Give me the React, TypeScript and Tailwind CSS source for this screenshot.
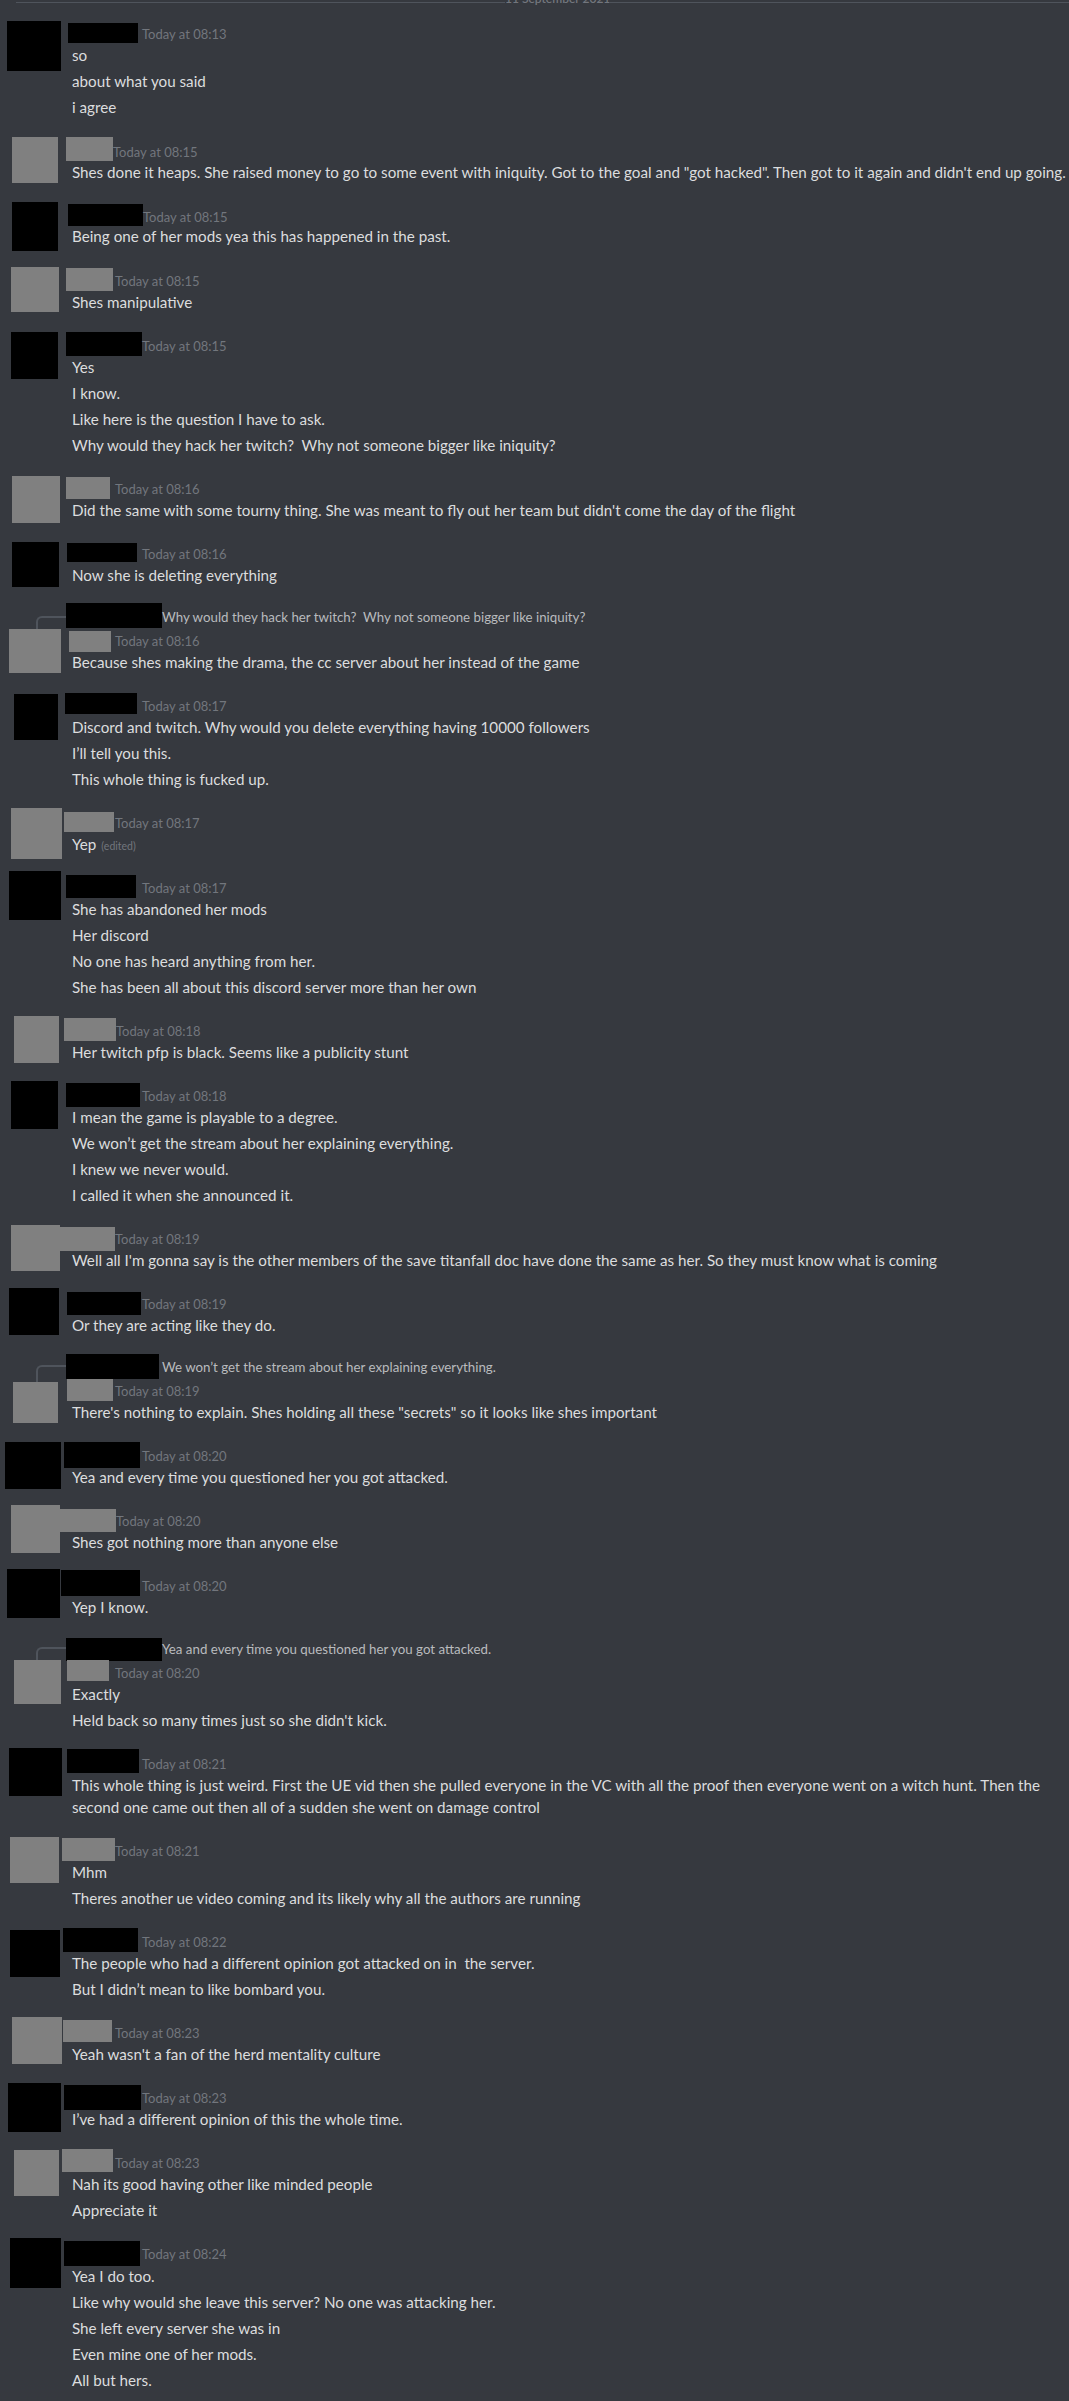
type Reply = {
  spine: string;
  name: string;
  text: string;
  body: string;
};

type Msg = {
  block: string;
  row?: string;
  avatar: string;
  col: string;
  head: string;
  name: string;
  time: string;
  text: string;
  stamp: string;
  lines: string[];
  wrap?: boolean;
  edited?: boolean;
  reply?: Reply;
};

const BLACK = "bg-black";
const GRAY = "bg-[#808080]";

const messages: Msg[] = [
  {
    block: "h-[116px]",
    avatar: `ml-[7px] w-[54px] h-[50px] ${BLACK}`,
    col: "ml-[7px]",
    head: "mt-[2px]",
    name: `w-[70px] h-[20px] ${BLACK}`,
    time: "ml-[4px] mt-[3px]",
    text: "ml-[4px] -mt-[1px]",
    stamp: "08:13",
    lines: ["so", "about what you said", "i agree"],
  },
  {
    block: "h-[65px]",
    avatar: `ml-[12px] w-[46px] h-[46px] ${GRAY}`,
    col: "ml-[8px]",
    head: "mt-0",
    name: `w-[47px] h-[24px] ${GRAY}`,
    time: "ml-0 mt-[7px]",
    text: "ml-[6px] -mt-[2px]",
    stamp: "08:15",
    lines: [
      'Shes done it heaps. She raised money to go to some event with iniquity. Got to the goal and "got hacked". Then got to it again and didn\'t end up going.',
    ],
  },
  {
    block: "h-[65px]",
    avatar: `ml-[12px] w-[46px] h-[49px] ${BLACK}`,
    col: "ml-[10px]",
    head: "mt-[2px]",
    name: `w-[75px] h-[22px] ${BLACK}`,
    time: "ml-0 mt-[5px]",
    text: "ml-[4px] -mt-[3px]",
    stamp: "08:15",
    lines: ["Being one of her mods yea this has happened in the past."],
  },
  {
    block: "h-[65px]",
    avatar: `ml-[11px] w-[48px] h-[45px] ${GRAY}`,
    col: "ml-[7px]",
    head: "mt-[1px]",
    name: `w-[47px] h-[23px] ${GRAY}`,
    time: "ml-[2px] mt-[5px]",
    text: "ml-[6px] -mt-[2px]",
    stamp: "08:15",
    lines: ["Shes manipulative"],
  },
  {
    block: "h-[144px]",
    avatar: `ml-[11px] w-[47px] h-[47px] ${BLACK}`,
    col: "ml-[8px]",
    head: "mt-0",
    name: `w-[76px] h-[24px] ${BLACK}`,
    time: "ml-0 mt-[6px]",
    text: "ml-[6px] -mt-[2px]",
    stamp: "08:15",
    lines: [
      "Yes",
      "I know.",
      "Like here is the question I have to ask.",
      "Why would they hack her twitch?  Why not someone bigger like iniquity?",
    ],
  },
  {
    block: "h-[66px]",
    avatar: `ml-[12px] w-[48px] h-[47px] ${GRAY}`,
    col: "ml-[6px]",
    head: "mt-[1px]",
    name: `w-[44px] h-[22px] ${GRAY}`,
    time: "ml-[5px] mt-[4px]",
    text: "ml-[6px] -mt-[2px]",
    stamp: "08:16",
    lines: [
      "Did the same with some tourny thing. She was meant to fly out her team but didn't come the day of the flight",
    ],
  },
  {
    block: "h-[61px]",
    avatar: `ml-[12px] w-[47px] h-[45px] ${BLACK}`,
    col: "ml-[8px]",
    head: "mt-[1px]",
    name: `w-[70px] h-[19px] ${BLACK}`,
    time: "ml-[5px] mt-[3px]",
    text: "ml-[5px] mt-0",
    stamp: "08:16",
    lines: ["Now she is deleting everything"],
  },
  {
    block: "h-[90px]",
    row: "h-[25px]",
    avatar: `ml-[9px] mt-[1px] w-[52px] h-[44px] ${GRAY}`,
    col: "ml-[8px]",
    head: "mt-[3px]",
    name: `w-[42px] h-[21px] ${GRAY}`,
    time: "ml-[4px] mt-[2px]",
    text: "ml-[3px] -mt-[3px]",
    stamp: "08:16",
    lines: ["Because shes making the drama, the cc server about her instead of the game"],
    reply: {
      spine: "mt-[13px] h-[13px]",
      name: "w-[96px] h-[25px]",
      text: "ml-0 mt-[6px]",
      body: "Why would they hack her twitch?  Why not someone bigger like iniquity?",
    },
  },
  {
    block: "h-[115px]",
    avatar: `ml-[14px] mt-[1px] w-[44px] h-[46px] ${BLACK}`,
    col: "ml-[7px]",
    head: "mt-0",
    name: `w-[72px] h-[21px] ${BLACK}`,
    time: "ml-[5px] mt-[5px]",
    text: "ml-[7px] mt-0",
    stamp: "08:17",
    lines: [
      "Discord and twitch. Why would you delete everything having 10000 followers",
      "I’ll tell you this.",
      "This whole thing is fucked up.",
    ],
  },
  {
    block: "h-[63px]",
    avatar: `ml-[11px] w-[51px] h-[51px] ${GRAY}`,
    col: "ml-[2px]",
    head: "mt-[4px]",
    name: `w-[50px] h-[20px] ${GRAY}`,
    time: "ml-[1px] mt-[3px]",
    text: "ml-[8px] -mt-[1px]",
    stamp: "08:17",
    lines: ["Yep"],
    edited: true,
  },
  {
    block: "h-[145px]",
    avatar: `ml-[9px] w-[52px] h-[49px] ${BLACK}`,
    col: "ml-[5px]",
    head: "mt-[4px]",
    name: `w-[70px] h-[23px] ${BLACK}`,
    time: "ml-[6px] mt-[5px]",
    text: "ml-[6px] -mt-[2px]",
    stamp: "08:17",
    lines: [
      "She has abandoned her mods",
      "Her discord",
      "No one has heard anything from her.",
      "She has been all about this discord server more than her own",
    ],
  },
  {
    block: "h-[65px]",
    avatar: `ml-[14px] w-[45px] h-[47px] ${GRAY}`,
    col: "ml-[5px]",
    head: "mt-[2px]",
    name: `w-[52px] h-[23px] ${GRAY}`,
    time: "ml-0 mt-[5px]",
    text: "ml-[8px] -mt-[2px]",
    stamp: "08:18",
    lines: ["Her twitch pfp is black. Seems like a publicity stunt"],
  },
  {
    block: "h-[144px]",
    avatar: `ml-[11px] w-[47px] h-[48px] ${BLACK}`,
    col: "ml-[8px]",
    head: "mt-[2px]",
    name: `w-[74px] h-[24px] ${BLACK}`,
    time: "ml-[2px] mt-[5px]",
    text: "ml-[6px] -mt-[3px]",
    stamp: "08:18",
    lines: [
      "I mean the game is playable to a degree.",
      "We won’t get the stream about her explaining everything.",
      "I knew we never would.",
      "I called it when she announced it.",
    ],
  },
  {
    block: "h-[63px]",
    avatar: `ml-[11px] w-[49px] h-[46px] ${GRAY}`,
    col: "ml-0",
    head: "mt-[2px]",
    name: `w-[55px] h-[24px] ${GRAY}`,
    time: "ml-0 mt-[4px]",
    text: "ml-[12px] -mt-[4px]",
    stamp: "08:19",
    lines: [
      "Well all I'm gonna say is the other members of the save titanfall doc have done the same as her. So they must know what is coming",
    ],
  },
  {
    block: "h-[66px]",
    avatar: `ml-[9px] w-[50px] h-[47px] ${BLACK}`,
    col: "ml-[8px]",
    head: "mt-[4px]",
    name: `w-[74px] h-[23px] ${BLACK}`,
    time: "ml-[1px] mt-[4px]",
    text: "ml-[5px] -mt-[3px]",
    stamp: "08:19",
    lines: ["Or they are acting like they do."],
  },
  {
    block: "h-[88px]",
    row: "h-[25px]",
    avatar: `ml-[13px] mt-[3px] w-[45px] h-[41px] ${GRAY}`,
    col: "ml-[9px]",
    head: "mt-0",
    name: `w-[46px] h-[22px] ${GRAY}`,
    time: "ml-[2px] mt-[4px]",
    text: "ml-[5px] -mt-[2px]",
    stamp: "08:19",
    lines: [
      'There\'s nothing to explain. Shes holding all these "secrets" so it looks like shes important',
    ],
    reply: {
      spine: "mt-[11px] h-[17px]",
      name: "w-[93px] h-[25px]",
      text: "ml-[3px] mt-[5px]",
      body: "We won’t get the stream about her explaining everything.",
    },
  },
  {
    block: "h-[63px]",
    avatar: `ml-[5px] w-[56px] h-[47px] ${BLACK}`,
    col: "ml-[3px]",
    head: "mt-0",
    name: `w-[76px] h-[26px] ${BLACK}`,
    time: "ml-[2px] mt-[6px]",
    text: "ml-[8px] -mt-[4px]",
    stamp: "08:20",
    lines: ["Yea and every time you questioned her you got attacked."],
  },
  {
    block: "h-[64px]",
    avatar: `ml-[11px] w-[49px] h-[48px] ${GRAY}`,
    col: "ml-0",
    head: "mt-[4px]",
    name: `w-[56px] h-[23px] ${GRAY}`,
    time: "ml-0 mt-[4px]",
    text: "ml-[12px] -mt-[3px]",
    stamp: "08:20",
    lines: ["Shes got nothing more than anyone else"],
  },
  {
    block: "h-[69px]",
    avatar: `ml-[7px] w-[53px] h-[49px] ${BLACK}`,
    col: "ml-[1px]",
    head: "mt-[1px]",
    name: `w-[79px] h-[26px] ${BLACK}`,
    time: "ml-[2px] mt-[8px]",
    text: "ml-[11px] -mt-[2px]",
    stamp: "08:20",
    lines: ["Yep I know."],
  },
  {
    block: "h-[110px]",
    row: "h-[23px]",
    avatar: `ml-[14px] -mt-[1px] w-[47px] h-[44px] ${GRAY}`,
    col: "ml-[6px]",
    head: "-mt-[1px]",
    name: `w-[42px] h-[21px] ${GRAY}`,
    time: "ml-[6px] mt-[5px]",
    text: "ml-[5px] mt-0",
    stamp: "08:20",
    lines: ["Exactly", "Held back so many times just so she didn't kick."],
    reply: {
      spine: "mt-[9px] h-[13px]",
      name: "w-[96px] h-[23px]",
      text: "ml-0 mt-[3px]",
      body: "Yea and every time you questioned her you got attacked.",
    },
  },
  {
    block: "h-[89px]",
    avatar: `ml-[9px] w-[53px] h-[48px] ${BLACK}`,
    col: "ml-[5px]",
    head: "mt-[1px]",
    name: `w-[72px] h-[24px] ${BLACK}`,
    time: "ml-[3px] mt-[7px]",
    text: "ml-[5px] mt-[1px]",
    stamp: "08:21",
    wrap: true,
    lines: [
      "This whole thing is just weird. First the UE vid then she pulled everyone in the VC with all the proof then everyone went on a witch hunt. Then the",
      "second one came out then all of a sudden she went on damage control",
    ],
  },
  {
    block: "h-[91px]",
    avatar: `ml-[10px] w-[49px] h-[46px] ${GRAY}`,
    col: "ml-[3px]",
    head: "mt-[1px]",
    name: `w-[53px] h-[23px] ${GRAY}`,
    time: "ml-0 mt-[5px]",
    text: "ml-[10px] -mt-[2px]",
    stamp: "08:21",
    lines: ["Mhm", "Theres another ue video coming and its likely why all the authors are running"],
  },
  {
    block: "h-[89px]",
    avatar: `ml-[10px] mt-[2px] w-[50px] h-[47px] ${BLACK}`,
    col: "ml-[3px]",
    head: "mt-0",
    name: `w-[75px] h-[24px] ${BLACK}`,
    time: "ml-[4px] mt-[6px]",
    text: "ml-[9px] -mt-[2px]",
    stamp: "08:22",
    lines: [
      "The people who had a different opinion got attacked on in  the server.",
      "But I didn’t mean to like bombard you.",
    ],
  },
  {
    block: "h-[66px]",
    avatar: `ml-[12px] w-[50px] h-[47px] ${GRAY}`,
    col: "ml-[1px]",
    head: "mt-[3px]",
    name: `w-[49px] h-[22px] ${GRAY}`,
    time: "ml-[3px] mt-[5px]",
    text: "ml-[9px] -mt-[1px]",
    stamp: "08:23",
    lines: ["Yeah wasn't a fan of the herd mentality culture"],
  },
  {
    block: "h-[66px]",
    avatar: `ml-[8px] w-[53px] h-[49px] ${BLACK}`,
    col: "ml-[3px]",
    head: "mt-[2px]",
    name: `w-[77px] h-[25px] ${BLACK}`,
    time: "ml-[1px] mt-[5px]",
    text: "ml-[8px] -mt-[4px]",
    stamp: "08:23",
    lines: ["I’ve had a different opinion of this the whole time."],
  },
  {
    block: "h-[89px]",
    avatar: `ml-[14px] mt-[1px] w-[45px] h-[46px] ${GRAY}`,
    col: "ml-[3px]",
    head: "mt-0",
    name: `w-[51px] h-[23px] ${GRAY}`,
    time: "ml-[2px] mt-[6px]",
    text: "ml-[10px] -mt-[1px]",
    stamp: "08:23",
    lines: ["Nah its good having other like minded people", "Appreciate it"],
  },
  {
    block: "h-[163px]",
    avatar: `ml-[10px] w-[51px] h-[50px] ${BLACK}`,
    col: "ml-[3px]",
    head: "mt-[3px]",
    name: `w-[76px] h-[25px] ${BLACK}`,
    time: "ml-[2px] mt-[5px]",
    text: "ml-[8px] -mt-[3px]",
    stamp: "08:24",
    lines: [
      "Yea I do too.",
      "Like why would she leave this server? No one was attacking her.",
      "She left every server she was in",
      "Even mine one of her mods.",
      "All but hers.",
    ],
  },
];

const MainRow = ({ m }: { m: Msg }) => (
  <div className="flex items-start">
    <div className={`shrink-0 ${m.avatar}`} />
    <div className={`flex flex-col ${m.col}`}>
      <div className={`flex items-start ${m.head}`}>
        <div className={`shrink-0 ${m.name}`} />
        <span className={`text-[13px] leading-[16px] text-[#72767d] whitespace-nowrap ${m.time}`}>
          Today at {m.stamp}
        </span>
      </div>
      <div className={`flex flex-col text-[#dcddde] text-[15.2px] ${m.wrap ? "leading-[22px]" : "leading-[26px]"} ${m.text}`}>
        {m.lines.map((line, i) => (
          <div key={i} className="whitespace-pre">
            {line}
            {m.edited && (
              <span className="ml-[5px] text-[10.5px] text-[#72767d]">(edited)</span>
            )}
          </div>
        ))}
      </div>
    </div>
  </div>
);

const Message = ({ m }: { m: Msg }) => {
  if (!m.reply) {
    return (
      <div className={`${m.block}`}>
        <MainRow m={m} />
      </div>
    );
  }
  return (
    <div className={`flex flex-col ${m.block}`}>
      <div className={`flex items-start ${m.row}`}>
        <div
          className={`ml-[36px] w-[30px] shrink-0 border-l-2 border-t-2 border-[#4f545c] rounded-tl-[6px] ${m.reply.spine}`}
        />
        <div className={`shrink-0 bg-black ${m.reply.name}`} />
        <span
          className={`text-[13.3px] leading-[16px] text-[#b9bbbe] whitespace-pre ${m.reply.text}`}
        >
          {m.reply.body}
        </span>
      </div>
      <MainRow m={m} />
    </div>
  );
};

const App = () => {
  return (
    <div className="w-[1069px] h-[2401px] overflow-hidden bg-[#36393f] font-[Lato,sans-serif]">
      <div className="flex items-start h-[21px]">
        <div className="ml-[16px] mt-[2px] w-[489px] h-px bg-[#4f545c]" />
        <span className="w-[104px] shrink-0 -mt-[9px] text-center text-[12px] font-semibold leading-[16px] text-[#72767d] whitespace-nowrap">
          11 September 2021
        </span>
        <div className="mt-[2px] flex-1 h-px bg-[#4f545c]" />
      </div>
      {messages.map((m, i) => (
        <Message key={i} m={m} />
      ))}
    </div>
  );
};

export default App;
